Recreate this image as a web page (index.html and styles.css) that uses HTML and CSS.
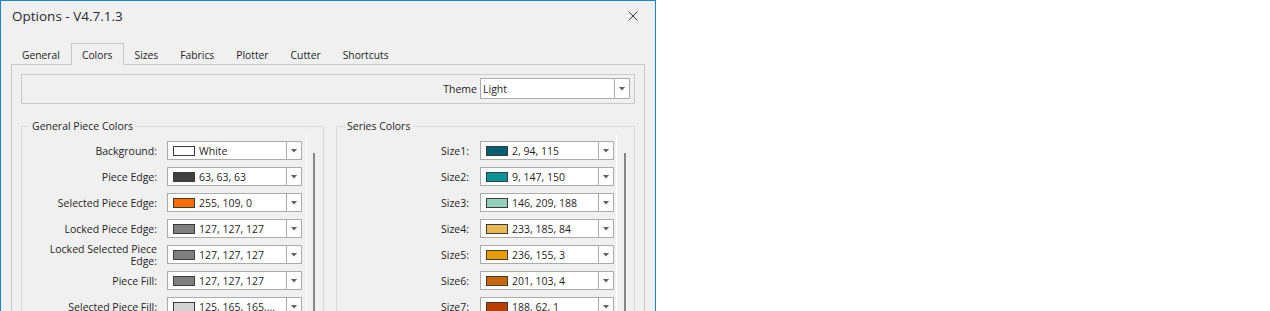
FILE: index.html
```html
<!DOCTYPE html>
<html lang="en">
<head>
    <meta charset="UTF-8">
    <meta name="viewport" content="width=device-width, initial-scale=1.0">
    <title>Options - V4.7.1.3</title>
    <link rel="stylesheet" href="styles.css">
</head>
<body>
    <div class="window">
        <div class="title-bar">
            <span class="title">Options - V4.7.1.3</span>
            <span class="close-button">
                <svg width="10" height="10" viewBox="0 0 10 10">
                    <path d="M0.5 0.5 L9.5 9.5 M9.5 0.5 L0.5 9.5" stroke="#3a3a3a" stroke-width="1" fill="none"/>
                </svg>
            </span>
        </div>

        <div class="tabs">
            <div class="tab">General</div>
            <div class="tab active">Colors</div>
            <div class="tab">Sizes</div>
            <div class="tab">Fabrics</div>
            <div class="tab">Plotter</div>
            <div class="tab">Cutter</div>
            <div class="tab">Shortcuts</div>
        </div>

        <div class="tab-panel">
            <div class="theme-box">
                <span class="theme-label">Theme</span>
                <div class="combo theme-combo">
                    <span class="combo-text">Light</span>
                    <span class="combo-button"></span>
                </div>
            </div>

            <div class="groups">
                <!-- General piece colors -->
                <fieldset class="group general-group">
                    <legend>General Piece Colors</legend>
                    <div class="scroll-panel">
                        <div class="rows">
                            <div class="row">
                                <span class="row-label">Background:</span>
                                <div class="combo">
                                    <span class="swatch" style="background: rgb(255, 255, 255)"></span>
                                    <span class="combo-text">White</span>
                                    <span class="combo-button"></span>
                                </div>
                            </div>
                            <div class="row">
                                <span class="row-label">Piece Edge:</span>
                                <div class="combo">
                                    <span class="swatch" style="background: rgb(63, 63, 63)"></span>
                                    <span class="combo-text">63, 63, 63</span>
                                    <span class="combo-button"></span>
                                </div>
                            </div>
                            <div class="row">
                                <span class="row-label">Selected Piece Edge:</span>
                                <div class="combo">
                                    <span class="swatch" style="background: rgb(255, 109, 0)"></span>
                                    <span class="combo-text">255, 109, 0</span>
                                    <span class="combo-button"></span>
                                </div>
                            </div>
                            <div class="row">
                                <span class="row-label">Locked Piece Edge:</span>
                                <div class="combo">
                                    <span class="swatch" style="background: rgb(127, 127, 127)"></span>
                                    <span class="combo-text">127, 127, 127</span>
                                    <span class="combo-button"></span>
                                </div>
                            </div>
                            <div class="row">
                                <span class="row-label">Locked Selected Piece Edge:</span>
                                <div class="combo">
                                    <span class="swatch" style="background: rgb(127, 127, 127)"></span>
                                    <span class="combo-text">127, 127, 127</span>
                                    <span class="combo-button"></span>
                                </div>
                            </div>
                            <div class="row">
                                <span class="row-label">Piece Fill:</span>
                                <div class="combo">
                                    <span class="swatch" style="background: rgb(127, 127, 127)"></span>
                                    <span class="combo-text">127, 127, 127</span>
                                    <span class="combo-button"></span>
                                </div>
                            </div>
                            <div class="row">
                                <span class="row-label">Selected Piece Fill:</span>
                                <div class="combo">
                                    <span class="swatch" style="background: rgb(211, 211, 211)"></span>
                                    <span class="combo-text">125, 165, 165,...</span>
                                    <span class="combo-button"></span>
                                </div>
                            </div>
                        </div>
                        <div class="scroll-track"><div class="scroll-thumb"></div></div>
                    </div>
                </fieldset>

                <!-- Series colors -->
                <fieldset class="group series-group">
                    <legend>Series Colors</legend>
                    <div class="scroll-panel">
                        <div class="rows">
                            <div class="row">
                                <span class="row-label">Size1:</span>
                                <div class="combo">
                                    <span class="swatch" style="background: rgb(2, 94, 115)"></span>
                                    <span class="combo-text">2, 94, 115</span>
                                    <span class="combo-button"></span>
                                </div>
                            </div>
                            <div class="row">
                                <span class="row-label">Size2:</span>
                                <div class="combo">
                                    <span class="swatch" style="background: rgb(9, 147, 150)"></span>
                                    <span class="combo-text">9, 147, 150</span>
                                    <span class="combo-button"></span>
                                </div>
                            </div>
                            <div class="row">
                                <span class="row-label">Size3:</span>
                                <div class="combo">
                                    <span class="swatch" style="background: rgb(146, 209, 188)"></span>
                                    <span class="combo-text">146, 209, 188</span>
                                    <span class="combo-button"></span>
                                </div>
                            </div>
                            <div class="row">
                                <span class="row-label">Size4:</span>
                                <div class="combo">
                                    <span class="swatch" style="background: rgb(233, 185, 84)"></span>
                                    <span class="combo-text">233, 185, 84</span>
                                    <span class="combo-button"></span>
                                </div>
                            </div>
                            <div class="row">
                                <span class="row-label">Size5:</span>
                                <div class="combo">
                                    <span class="swatch" style="background: rgb(236, 155, 3)"></span>
                                    <span class="combo-text">236, 155, 3</span>
                                    <span class="combo-button"></span>
                                </div>
                            </div>
                            <div class="row">
                                <span class="row-label">Size6:</span>
                                <div class="combo">
                                    <span class="swatch" style="background: rgb(201, 103, 4)"></span>
                                    <span class="combo-text">201, 103, 4</span>
                                    <span class="combo-button"></span>
                                </div>
                            </div>
                            <div class="row">
                                <span class="row-label">Size7:</span>
                                <div class="combo">
                                    <span class="swatch" style="background: rgb(188, 62, 1)"></span>
                                    <span class="combo-text">188, 62, 1</span>
                                    <span class="combo-button"></span>
                                </div>
                            </div>
                        </div>
                        <div class="scroll-track"><div class="scroll-thumb"></div></div>
                    </div>
                </fieldset>
            </div>
        </div>
    </div>
</body>
</html>
```

FILE: styles.css
```css
html, body {
    margin: 0;
    height: 100%;
    overflow: hidden;
    background: #FFFFFF;
}

body {
    font-family: "Open Sans", "Noto Sans", sans-serif;
    font-size: 10.5px;
    color: #1f1f1f;
}

.window {
    width: 654px;
    height: 420px;
    border: 1px solid #1883d7;
    border-bottom: none;
    background-color: #f0f0f0;
}

.title-bar {
    display: flex;
    align-items: center;
    justify-content: space-between;
    height: 30px;
    padding: 0 17px 0 11px;
}

.title {
    font-size: 13.5px;
    color: #2b2b2b;
}

.close-button {
    display: flex;
    margin-top: -1px;
}

.tabs {
    display: flex;
    margin: 12px 0 0 10px;
    font-size: 10.3px;
}

.tab {
    display: flex;
    align-items: center;
    height: 22px;
    box-sizing: border-box;
    padding: 0 10px;
    border: 1px solid transparent;
    border-bottom: none;
}

.tab.active {
    position: relative;
    z-index: 1;
    border-color: #c9c9c9;
    background-color: #f0f0f0;
}

.tab-panel {
    margin: -1px 10px 0 10px;
    padding: 9px;
    height: 300px;
    border: 1px solid #c9c9c9;
}

.theme-box {
    display: flex;
    justify-content: flex-end;
    align-items: center;
    gap: 3px;
    padding: 3px 4px 4px 0;
    border: 1px solid #c9c9c9;
}

.combo {
    display: flex;
    align-items: center;
    flex-shrink: 0;
    width: 135px;
    height: 19px;
    box-sizing: border-box;
    border: 1px solid #ababab;
    background-color: #FFFFFF;
}

.theme-combo {
    width: 150px;
    height: 21px;
}

.theme-combo .combo-text {
    padding-left: 2px;
}

.combo-text {
    flex: 1;
    white-space: nowrap;
    overflow: hidden;
}

.combo-button {
    display: flex;
    align-items: center;
    justify-content: center;
    align-self: stretch;
    width: 15px;
    box-sizing: border-box;
    border-left: 1px solid #ababab;
}

.combo-button::after {
    content: "";
    width: 7px;
    height: 4px;
    background-color: #606060;
    clip-path: polygon(0 0, 100% 0, 50% 100%);
}

.swatch {
    width: 22px;
    height: 10px;
    box-sizing: border-box;
    margin: 0 4px 0 5px;
    border: 1px solid #3c3c3c;
}

.groups {
    display: flex;
    gap: 12px;
    margin-top: 14px;
}

.group {
    margin: 0;
    min-width: 0;
    padding: 1px 0 0 7px;
    border: 1px solid #d9d9d9;
    box-sizing: border-box;
}

.group legend {
    padding: 0 3px;
    line-height: 16px;
}

.general-group {
    width: 303px;
}

.series-group {
    width: 299px;
}

.scroll-panel {
    display: flex;
}

.rows {
    flex: 1;
    padding: 6px 4px 0 0;
}

.series-group .rows {
    padding-right: 2px;
}

.row {
    display: flex;
    align-items: center;
    height: 19px;
    margin-bottom: 7px;
}

.row-label {
    flex: 1;
    margin-right: 10px;
    text-align: right;
    line-height: 12px;
}

.series-group .row-label {
    margin-right: 11px;
}

.series-group .combo {
    width: 134px;
}

.scroll-track {
    width: 16px;
    border-left: 1px solid #FFFFFF;
}

.series-group .scroll-track {
    width: 17px;
}

.scroll-thumb {
    width: 2px;
    height: 400px;
    margin: 18px 0 0 6px;
    background-color: #868686;
}

.series-group .scroll-thumb {
    margin-left: 7px;
}
```
